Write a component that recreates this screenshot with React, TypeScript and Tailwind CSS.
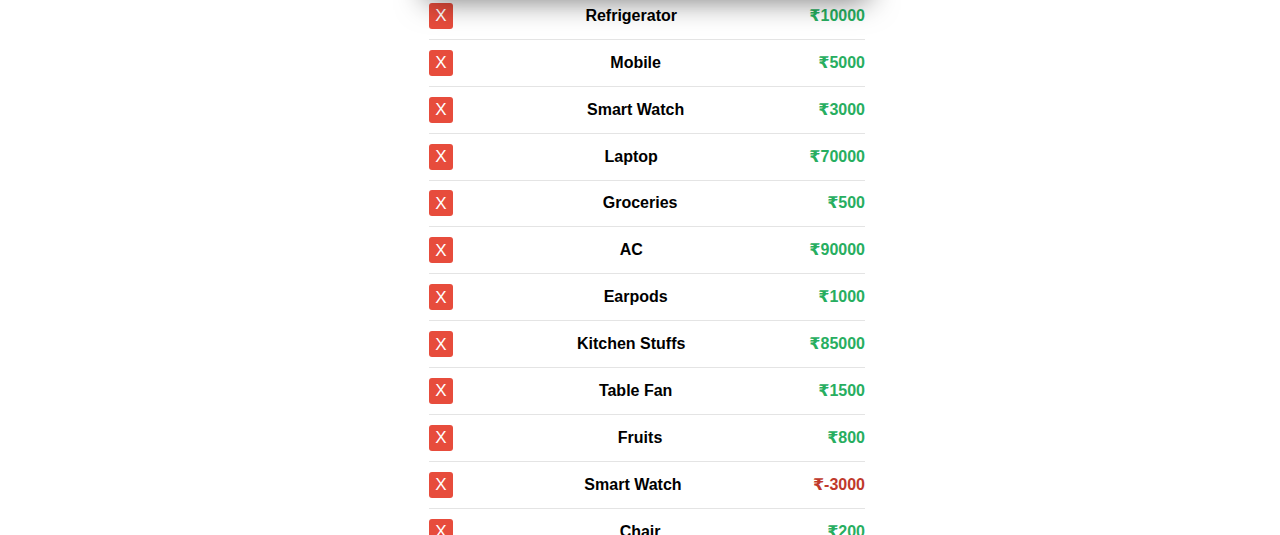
import React from "react";

const items: { name: string; amount: number }[] = [
  { name: "Refrigerator", amount: 10000 },
  { name: "Mobile", amount: 5000 },
  { name: "Smart Watch", amount: 3000 },
  { name: "Laptop", amount: 70000 },
  { name: "Groceries", amount: 500 },
  { name: "AC", amount: 90000 },
  { name: "Earpods", amount: 1000 },
  { name: "Kitchen Stuffs", amount: 85000 },
  { name: "Table Fan", amount: 1500 },
  { name: "Fruits", amount: 800 },
  { name: "Smart Watch", amount: -3000 },
  { name: "Chair", amount: 200 },
];

export default function App() {
  return (
    <div
      className="relative h-[535px] w-[1280px] overflow-hidden bg-white"
      style={{ fontFamily: '"Liberation Sans", Arial, "DejaVu Sans", sans-serif' }}
    >
      <div className="absolute left-[426px] top-[-40px] h-[40px] w-[442px] bg-white shadow-[0_0_30px_rgba(0,0,0,0.55)]" />
      <ul className="ml-[429px] mt-[-7px] w-[436px]">
        {items.map((it, i) => (
          <li
            key={i}
            className="flex items-center justify-between border-b border-[#e4e4e4] py-[9.95px]"
          >
            <button className="flex h-[26px] w-[24px] items-center justify-center rounded-[3px] bg-[#e74c3c] text-[17px] leading-none text-white">
              X
            </button>
            <span className="text-[16px] font-bold text-black">{it.name}</span>
            <span
              className={
                "text-[16px] font-bold " +
                (it.amount < 0 ? "text-[#c0392b]" : "text-[#27ae60]")
              }
            >
              ₹{it.amount}
            </span>
          </li>
        ))}
      </ul>
    </div>
  );
}
